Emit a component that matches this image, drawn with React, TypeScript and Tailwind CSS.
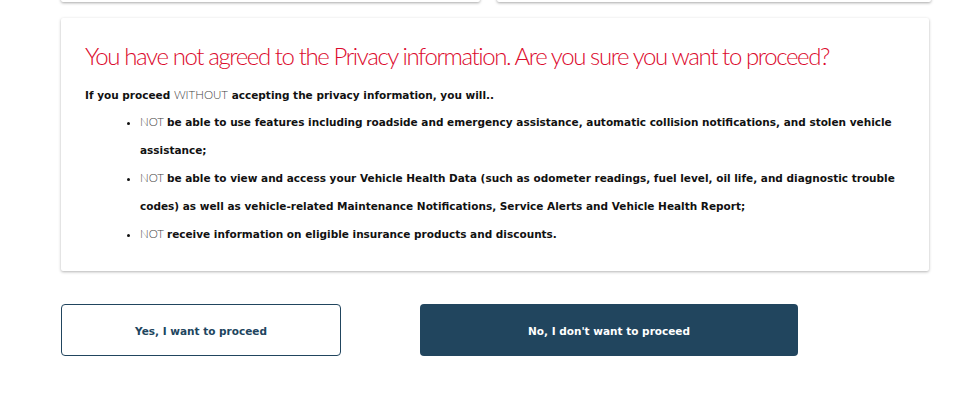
export default function App() {
  const items = [
    "be able to use features including roadside and emergency assistance, automatic collision notifications, and stolen vehicle assistance;",
    "be able to view and access your Vehicle Health Data (such as odometer readings, fuel level, oil life, and diagnostic trouble codes) as well as vehicle-related Maintenance Notifications, Service Alerts and Vehicle Health Report;",
    "receive information on eligible insurance products and discounts.",
  ];

  return (
    <div className="w-[978px] h-[420px] bg-white overflow-hidden" style={{ fontFamily: "'DejaVu Sans', 'Liberation Sans', sans-serif" }}>
      {/* cut-off cards from the step above */}
      <div className="flex gap-[17px] pl-[61px] -mt-[20px]">
        <div className="w-[419px] h-[22px] bg-white rounded-[2px] shadow-[0_1px_3px_rgba(0,0,0,0.35)]"></div>
        <div className="w-[434px] h-[22px] bg-white rounded-[2px] shadow-[0_1px_3px_rgba(0,0,0,0.35)]"></div>
      </div>

      <div className="ml-[61px] mt-[16px] w-[868px] h-[253px] bg-white rounded-[2px] shadow-[0_1px_3px_rgba(0,0,0,0.3)] px-[24px] pt-[22px]">
        <h2 className="font-['Lato',sans-serif] text-[#dc0a2d] text-[24px] font-light leading-[32px] tracking-[-1.4px]">
          You have not agreed to the Privacy information. Are you sure you want to proceed?
        </h2>
        <p className="mt-[14px] text-[10.5px] leading-[18px] font-bold text-[#111]">
          If you proceed <span className="font-['Lato',sans-serif] text-[11.5px] font-light text-[#444]">WITHOUT</span> accepting the privacy information, you will..
        </p>
        <ul className="mt-[4px] pl-[55px] list-disc text-[10.5px] leading-[28px] font-bold text-[#111]">
          {items.map((t, i) => (
            <li key={i}>
              <span className="font-['Lato',sans-serif] text-[11.5px] font-light text-[#444] mr-[3px]">NOT</span>{t}
            </li>
          ))}
        </ul>
      </div>

      <div className="flex gap-[79px] ml-[61px] mt-[33px]">
        <button className="w-[280px] h-[52px] pt-[3px] border border-[#21455e] rounded-[4px] bg-white text-[#21455e] text-[10.5px] font-bold">
          Yes, I want to proceed
        </button>
        <button className="w-[378px] h-[52px] pt-[3px] rounded-[4px] bg-[#21455e] text-white text-[10.5px] font-bold">
          No, I don't want to proceed
        </button>
      </div>
    </div>
  );
}
